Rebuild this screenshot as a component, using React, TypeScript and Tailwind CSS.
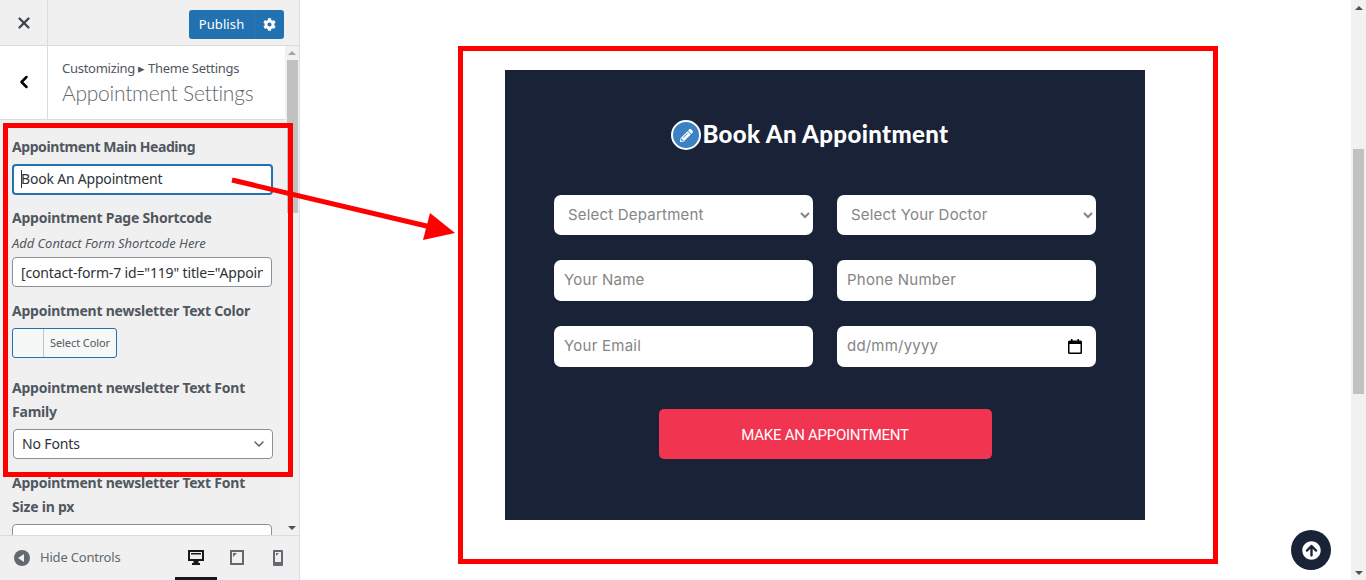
import { ChevronDown, ChevronLeft, X } from "lucide-react";
import { FaArrowCircleUp, FaCog, FaPencilAlt } from "react-icons/fa";

const sideFont = "font-['Noto_Sans',sans-serif]";
const formFont = "font-['Inter',sans-serif]";

function SideLabel({ children, className = "" }: { children: React.ReactNode; className?: string }) {
  return (
    <div className={`text-[14px] leading-[24px] font-bold tracking-[-0.22px] text-[#50575e] ${className}`}>
      {children}
    </div>
  );
}

function FormInput({ placeholder }: { placeholder: string }) {
  return (
    <input
      readOnly
      placeholder={placeholder}
      className={`h-full w-full rounded-[7px] bg-white px-[10px] pb-[2px] text-[15px] tracking-[0.25px] text-[#333] outline-none placeholder:text-[#858585] ${formFont}`}
    />
  );
}

function FormSelect({ label }: { label: string }) {
  return (
    <select
      defaultValue={label}
      className={`h-full w-full rounded-[7px] bg-white pb-px pl-[10px] text-[15px] tracking-[0.2px] text-[#858585] outline-none ${formFont}`}
    >
      <option>{label}</option>
    </select>
  );
}

function Sidebar() {
  return (
    <aside className={`flex h-[580px] w-[300px] shrink-0 flex-col border-r border-[#dcdcde] bg-[#f0f0f1] ${sideFont}`}>
      <header className="flex h-[46px] shrink-0 items-center border-b border-[#dcdcde]">
        <div className="flex h-full w-[48px] items-center justify-center border-r border-[#dcdcde]">
          <X size={18} strokeWidth={3} className="text-[#3c434a]" />
        </div>
        <div className="ml-auto mr-[15px] mt-[3px] flex h-[29px] w-[95px] overflow-hidden rounded-[3px] bg-[#2271b1] text-white">
          <div className="flex flex-1 items-center justify-center pt-px text-[13px] tracking-[0.1px]">Publish</div>
          <div className="flex w-[30px] items-center justify-center border-l border-[#2c79b8]">
            <FaCog size={13} />
          </div>
        </div>
      </header>
      <div className="flex min-h-0 flex-1">
        <div className="min-w-0 flex-1 overflow-hidden">
          <div className="flex h-[74px] border-b border-[#dcdcde] bg-white">
            <div className="flex w-[48px] items-center justify-center border-r border-[#dcdcde] pb-[2px]">
              <ChevronLeft size={20} strokeWidth={3} className="text-black" />
            </div>
            <div className="pl-[14px] pt-[13px]">
              <div className="text-[13px] leading-[19px] tracking-[-0.27px] text-[#50575e]">Customizing ▸ Theme Settings</div>
              <div className="font-['Lato',sans-serif] text-[21px] leading-[30px] font-light tracking-[-0.25px] text-[#646970]">Appointment Settings</div>
            </div>
          </div>
          <div className="pl-[12px] pt-[15px]">
            <SideLabel className="tracking-[-0.42px]">Appointment Main Heading</SideLabel>
            <div className="relative mt-[5px] h-[31px] w-[261px]">
              <input
                readOnly
                value="Book An Appointment"
                className="h-full w-full rounded-[4px] border-2 border-[#2271b1] bg-white px-[7px] pb-[2px] text-[14px] tracking-[-0.2px] text-[#2c3338] outline-none"
              />
              <span className="absolute left-[9px] top-[6px] h-[18px] w-px bg-[#2c3338]" />
            </div>
            <SideLabel className="mt-[11px]">Appointment Page Shortcode</SideLabel>
            <div className="text-[13px] leading-[26px] italic tracking-[-0.05px] text-[#50575e]">Add Contact Form Shortcode Here</div>
            <input
              readOnly
              value={'[contact-form-7 id="119" title="Appointment"]'}
              className="mt-px h-[30px] w-[260px] rounded-[4px] border border-[#8c8f94] bg-white px-[8px] text-[14px] tracking-[-0.15px] text-[#2c3338] outline-none"
            />
            <SideLabel className="mt-[12px]">Appointment newsletter Text Color</SideLabel>
            <div className="mt-[5px] flex h-[30px] w-[105px] overflow-hidden rounded-[3px] border border-[#2271b1] bg-[#f6f7f7]">
              <div className="w-[31px] border-r border-[#c3c4c7]" />
              <div className="flex flex-1 items-center justify-center text-[11px] tracking-[-0.1px] text-[#50575e]">Select Color</div>
            </div>
            <SideLabel className="mt-[18px]">
              Appointment newsletter Text Font
              <br />
              Family
            </SideLabel>
            <div className="ml-px mt-[5px] flex h-[30px] w-[260px] items-center justify-between rounded-[4px] border border-[#8c8f94] bg-white pb-px pl-[8px] pr-[5px] text-[14px] tracking-[-0.15px] text-[#2c3338]">
              No Fonts
              <ChevronDown size={16} strokeWidth={2} className="text-[#50575e]" />
            </div>
            <SideLabel className="mt-[12px]">
              Appointment newsletter Text Font
              <br />
              Size in px
            </SideLabel>
            <div className="mt-[5px] h-[30px] w-[260px] rounded-[4px] border border-[#8c8f94] bg-white" />
          </div>
        </div>
        <div className="flex w-[14px] shrink-0 flex-col items-center bg-[#f1f1f1]">
          <div className="mt-[5px] h-0 w-0 border-x-[4px] border-b-[4px] border-x-transparent border-b-[#a3a3a3]" />
          <div className="mt-[5px] h-[153px] w-[11px] bg-[#c1c1c1]" />
          <div className="mb-[5px] mt-auto h-0 w-0 border-x-[4px] border-t-[4px] border-x-transparent border-t-[#505050]" />
        </div>
      </div>
      <footer className="flex h-[45px] shrink-0 items-center border-t border-[#dcdcde] pl-[14px]">
        <div className="flex h-[16px] w-[16px] items-center justify-center rounded-full bg-[#646970]">
          <div className="mr-[2px] h-0 w-0 border-y-[4px] border-r-[6px] border-y-transparent border-r-[#f0f0f1]" />
        </div>
        <span className="ml-[10px] text-[13px] tracking-[-0.2px] text-[#646970]">Hide Controls</span>
        <div className="ml-auto mr-px flex h-full">
          <div className="flex h-full w-[42px] items-center justify-center border-b-[3px] border-[#16181a] pt-[2px]">
            <svg width="16" height="16" viewBox="0 0 16 16" className="text-[#16181a]">
              <path fill="currentColor" fillRule="evenodd" d="M0 0h16v11h-5.500v2H12v2H4v-2h1.500v-2H0zM2 2v7h12V2z" />
              <path fill="currentColor" d="M3 3h10v1.500H3z" />
            </svg>
          </div>
          <div className="flex w-[40px] items-center justify-center pb-px">
            <svg width="14" height="15" viewBox="0 0 14 15" className="text-[#646970]">
              <path fill="currentColor" fillRule="evenodd" d="M0 0h14v15H0zM2 2v11h10V2z" />
              <path fill="currentColor" d="M3 3h4L3 7z" />
            </svg>
          </div>
          <div className="flex w-[41px] items-center justify-center pb-px">
            <svg width="10" height="16" viewBox="0 0 10 16" className="text-[#646970]">
              <path fill="currentColor" fillRule="evenodd" d="M1 0h8a1 1 0 0 1 1 1v14a1 1 0 0 1-1 1H1a1 1 0 0 1-1-1V1a1 1 0 0 1 1-1zM2 2v10h6V2z" />
              <path fill="currentColor" d="M3 3h3L3 6z" />
            </svg>
          </div>
        </div>
      </footer>
    </aside>
  );
}

function Preview() {
  return (
    <main className="relative h-[580px] min-w-0 flex-1 bg-white">
      <section className="ml-[205px] mt-[70px] h-[450px] w-[640px] bg-[#1a2238] px-[49px] pt-[50px]">
        <h2 className="flex h-[30px] items-center justify-center pr-[30px] font-['Lato',sans-serif] text-[24px] font-black tracking-[0.36px] text-white">
          <span className="mr-px flex h-[30px] w-[30px] items-center justify-center rounded-full border-2 border-white bg-[#3b82c4]">
            <FaPencilAlt size={13} />
          </span>
          <span className="pb-[2px]">Book An Appointment</span>
        </h2>
        <div className="mt-[45px] grid grid-cols-2 grid-rows-[40px_41px_41px] gap-x-[24px] gap-y-[25px]">
          <FormSelect label="Select Department" />
          <FormSelect label="Select Your Doctor" />
          <FormInput placeholder="Your Name" />
          <FormInput placeholder="Phone Number" />
          <FormInput placeholder="Your Email" />
          <div className={`flex items-center justify-between rounded-[7px] bg-white pb-px pl-[10px] pr-[14px] text-[15px] tracking-[0.2px] text-[#858585] ${formFont}`}>
            dd/mm/yyyy
            <svg width="14" height="15" viewBox="0 0 14 15" className="text-black">
              <path fill="currentColor" fillRule="evenodd" d="M3 0h1.500v1.500h5V0H11v1.500h1.500A1.500 1.500 0 0 1 14 3v10.500a1.500 1.500 0 0 1-1.500 1.500h-11A1.500 1.500 0 0 1 0 13.500V3a1.500 1.500 0 0 1 1.500-1.500H3zM1.500 5v8.500h11V5z" />
            </svg>
          </div>
        </div>
        <button className="mx-auto mt-[42px] block h-[50px] w-[333px] rounded-[5px] bg-[#f1344f] pt-[2px] font-['Roboto',sans-serif] text-[15px] tracking-[-0.27px] text-white">
          MAKE AN APPOINTMENT
        </button>
      </section>
      <button className="absolute bottom-[10px] right-[20px] flex h-[40px] w-[40px] items-center justify-center rounded-full bg-[#1a2238] text-white">
        <FaArrowCircleUp size={19} />
      </button>
    </main>
  );
}

function PageScrollbar() {
  return (
    <div className="flex h-[580px] w-[15px] shrink-0 flex-col items-center bg-[#f1f1f1]">
      <div className="mt-[6px] h-0 w-0 border-x-[4px] border-b-[4px] border-x-transparent border-b-[#505050]" />
      <div className="mt-[139px] h-[245px] w-[11px] bg-[#c1c1c1]" />
      <div className="mb-[5px] mt-auto h-0 w-0 border-x-[4px] border-t-[4px] border-x-transparent border-t-[#505050]" />
    </div>
  );
}

export default function App() {
  return (
    <div className="relative flex h-[580px] w-[1366px] overflow-hidden">
      <Sidebar />
      <Preview />
      <PageScrollbar />
      {/* red annotations drawn over the screenshot */}
      <div className="pointer-events-none absolute left-[3px] top-[123px] h-[354px] w-[290px] border-[5px] border-[#ff0000]" />
      <div className="pointer-events-none absolute left-[458px] top-[46px] h-[518px] w-[760px] border-[5px] border-[#ff0000]" />
      <svg className="pointer-events-none absolute left-0 top-0" width="1366" height="580">
        <path d="M232 180L435 228" stroke="#ff0000" strokeWidth="5" />
        <path d="M430 213L423 240L455 233Z" fill="#ff0000" />
      </svg>
    </div>
  );
}
